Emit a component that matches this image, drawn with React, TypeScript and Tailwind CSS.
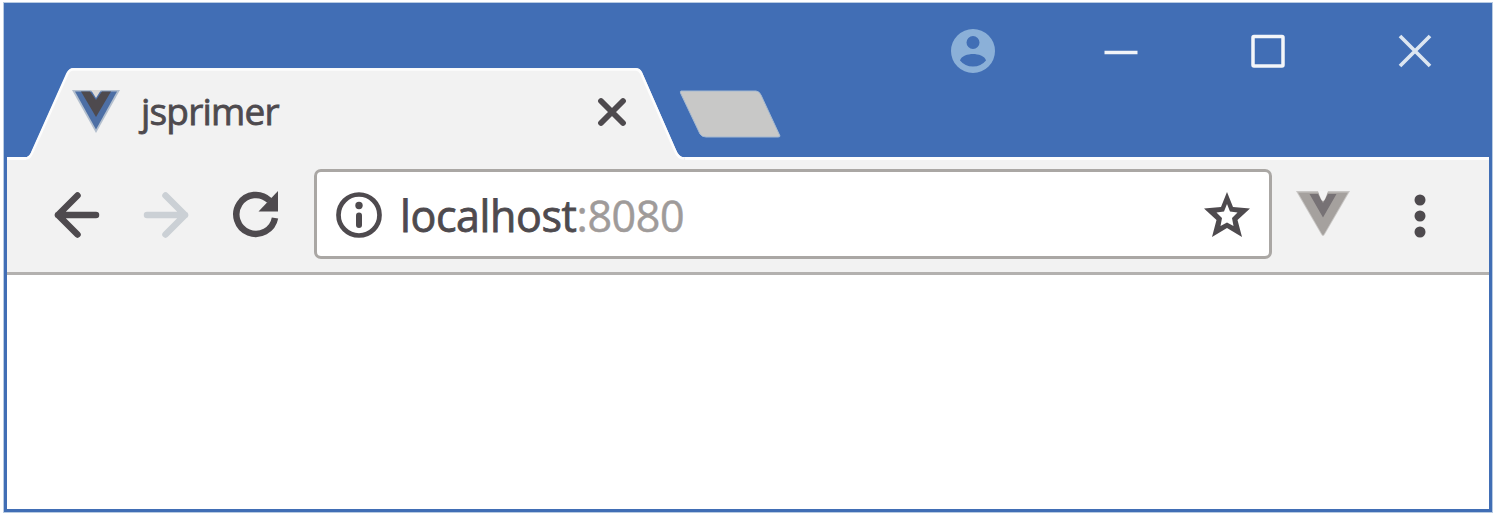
import type { ReactNode } from "react";

const INK = "#4e4a4e";

function TabShape() {
  return (
    <svg className="absolute inset-0" width="660" height="94" viewBox="0 0 660 94" aria-hidden="true">
      <path
        d="M-1 94V90.500C3 90 4 88 5.500 85L41 6Q43.500 1 47 1H610Q614 1 616 5L650 83Q653 90.500 659 90.500V94Z"
        fill="#f2f2f2"
      />
      <path
        d="M0 91.500C3.500 91 4.500 89 6 86L41.500 6.500Q43.500 2.500 47 2.500H610Q613 2.500 615 6L649 83.500Q652 91.500 658 91.500"
        fill="none"
        stroke="#fdfdfd"
        strokeWidth="2.500"
      />
    </svg>
  );
}

function Favicon() {
  return (
    <svg width="48" height="43" viewBox="0 0 48 43" aria-hidden="true">
      <path d="M0 0H48L24 43Z" fill="#b3bfce" />
      <path d="M3 1.500H45L24 39.500Z" fill="#4d6fa5" />
      <path d="M9 1.500H18L24 10L30 1.500H39L24 27Z" fill={INK} />
      <path d="M19 0H29L24 8Z" fill="#dcd9d7" />
    </svg>
  );
}

function DevtoolsIcon() {
  return (
    <svg width="54" height="46" viewBox="0 0 54 46" aria-hidden="true">
      <path d="M0 0H54L29 43Q27 47 25 43Z" fill="#c8c6c4" />
      <path d="M2 1.500H52L28 43Q27 45 26 43Z" fill="#a5a19e" />
      <path d="M13.500 3H22L27 12L32 3H40.500L27 26.500Z" fill="#777275" />
      <path d="M22 0H32Q29 10 27 10Q25 10 22 0Z" fill="#f4f4f4" />
    </svg>
  );
}

function Arrow({ color, flipped = false }: { color: string; flipped?: boolean }) {
  return (
    <svg className={flipped ? "rotate-180" : ""} width="48" height="48" viewBox="0 0 48 48" aria-hidden="true">
      <path d="M25.500 4.500L6 24L25.500 43.500M6 24H44" fill="none" stroke={color} strokeWidth="6.500" strokeLinecap="round" strokeLinejoin="round" />
    </svg>
  );
}

function Reload() {
  return (
    <svg width="48" height="48" viewBox="0 0 48 48" aria-hidden="true">
      <path d="M43 28A19.500 19.500 0 1 1 37.500 10.500" fill="none" stroke={INK} strokeWidth="6.500" />
      <path d="M46 1V21.500H26.500Z" fill={INK} />
    </svg>
  );
}

function InfoIcon() {
  return (
    <svg width="46" height="46" viewBox="0 0 46 46" aria-hidden="true">
      <circle cx="23" cy="23" r="20.500" fill="none" stroke={INK} strokeWidth="4.700" />
      <circle cx="23" cy="13.500" r="3.700" fill={INK} />
      <path d="M23 23.500V33" stroke={INK} strokeWidth="6" strokeLinecap="round" />
    </svg>
  );
}

function Star() {
  return (
    <svg width="46" height="45" viewBox="0 0 46 45" aria-hidden="true">
      <path
        fillRule="evenodd"
        d="M23 0L29 15L46 16.500L33.500 28L38 45L23 36L8 45L12.500 28L0 16.500L17 15ZM23 12L20 19.500L12.500 20.500L18 26L16.500 34L23 30.500L29.500 34L28 26L33.500 20.500L26 19.500Z"
        fill={INK}
      />
    </svg>
  );
}

function Profile() {
  return (
    <svg width="44" height="44" viewBox="0 0 44 44" aria-hidden="true">
      <path
        fillRule="evenodd"
        d="M22 0A22 22 0 1 1 22 44A22 22 0 1 1 22 0ZM22 7A6.500 6.500 0 1 0 22 20A6.500 6.500 0 1 0 22 7ZM9 31.500Q14 37.500 22 37.500Q30 37.500 35 31.500C34 27 27 25 22 25C17 25 10 27 9 31.500Z"
        fill="#8bb0d8"
      />
    </svg>
  );
}

function IconButton({ label, className, children }: { label: string; className: string; children: ReactNode }) {
  return (
    <button type="button" aria-label={label} className={`block shrink-0 ${className}`}>
      {children}
    </button>
  );
}

export default function App() {
  return (
    <div className="h-[519px] w-[1499px] overflow-hidden bg-white pl-1 pt-[3px] font-['Open_Sans','Noto_Sans',sans-serif]">
      <div className="flex h-[509px] w-[1488px] flex-col border-[3px] border-[#416eb5] bg-white outline outline-[#b8cbe2]">
        <header className="flex h-[151px] shrink-0 items-end bg-[#416eb5]">
          <div className="relative z-10 -mb-1 ml-[19px] flex h-[94px] w-[660px] shrink-0 items-start">
            <TabShape />
            <div className="relative flex w-full items-start pl-[46px]">
              <div className="mt-[23px]">
                <Favicon />
              </div>
              <span className="ml-[21px] mt-[18px] text-[37px] leading-[52px] tracking-[-0.8px] text-[#4e4a4e] [-webkit-text-stroke:0.8px]">jsprimer</span>
              <IconButton label="Close tab" className="ml-auto mr-[59px] mt-[30px]">
                <svg width="30" height="30" viewBox="0 0 30 30" aria-hidden="true">
                  <path d="M4 4L26 26M26 4L4 26" stroke={INK} strokeWidth="5.800" strokeLinecap="round" />
                </svg>
              </IconButton>
            </div>
          </div>
          <IconButton label="New tab" className="-ml-[7px] mb-[19px]">
            <svg width="103" height="48" viewBox="0 0 103 48" aria-hidden="true">
              <path d="M2 1H77Q80 1 82 5L101 46Q101 47 99 47H27Q23 47 21 44L1.500 3Q1 1 2 1Z" fill="#c8c8c7" stroke="#a5b9d1" strokeWidth="1" />
            </svg>
          </IconButton>
          <div className="ml-auto mr-[57px] flex items-center self-start pt-[23px]">
            <Profile />
            <IconButton label="Minimize" className="ml-[109px]">
              <svg width="34" height="34" viewBox="0 0 34 34" aria-hidden="true">
                <path d="M0.500 18.500H33.500" stroke="#f1f4f8" strokeWidth="3.500" />
              </svg>
            </IconButton>
            <IconButton label="Maximize" className="ml-[113px]">
              <svg width="34" height="34" viewBox="0 0 34 34" aria-hidden="true">
                <rect x="2" y="2.500" width="30" height="29.500" rx="1" fill="none" stroke="#f4f6f9" strokeWidth="3.500" />
              </svg>
            </IconButton>
            <IconButton label="Close window" className="ml-[113px]">
              <svg width="34" height="34" viewBox="0 0 34 34" aria-hidden="true">
                <path d="M2 2L32 32M32 2L2 32" stroke="#dce6f1" strokeWidth="3.700" />
              </svg>
            </IconButton>
          </div>
        </header>

        <nav className="flex h-[118px] shrink-0 items-start border-b-[3px] border-t-[3px] border-b-[#b3b1af] border-t-[#fdfdfd] bg-[#f2f2f2]">
          <IconButton label="Back" className="ml-[45px] mt-[31px]">
            <Arrow color={INK} />
          </IconButton>
          <IconButton label="Forward" className="ml-[43px] mt-[31px]">
            <Arrow color="#cbd0d5" flipped />
          </IconButton>
          <IconButton label="Reload" className="ml-[41px] mt-[30px]">
            <Reload />
          </IconButton>
          <div className="ml-[34px] mt-[9px] flex h-[90px] w-[958px] shrink-0 items-start rounded-[7px] border-[3.500px] border-[#aaa7a4] bg-white">
            <div className="ml-[19px] mt-[20px]">
              <InfoIcon />
            </div>
            <div className="ml-[18px] mt-[14px] text-[43px] leading-[60px] tracking-[-0.4px] text-[#9f9b9a] [-webkit-text-stroke:0.5px]">
              <span className="text-[#4e4a4e] [-webkit-text-stroke:0.8px]">localhost</span>:8080
            </div>
            <IconButton label="Bookmark" className="ml-auto mr-[19px] mt-[20px]">
              <Star />
            </IconButton>
          </div>
          <div className="ml-[24px] mt-[31px]">
            <DevtoolsIcon />
          </div>
          <IconButton label="Menu" className="ml-[63px] mt-[32px]">
            <svg width="14" height="48" viewBox="0 0 14 48" aria-hidden="true">
              <circle cx="7" cy="8" r="5.500" fill={INK} />
              <circle cx="7" cy="24" r="5.500" fill={INK} />
              <circle cx="7" cy="40" r="5.500" fill={INK} />
            </svg>
          </IconButton>
        </nav>
        <main className="flex-1 bg-white" />
      </div>
    </div>
  );
}
